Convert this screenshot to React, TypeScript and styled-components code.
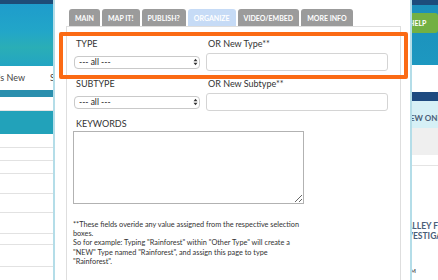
import styled, { createGlobalStyle } from 'styled-components';

const GlobalStyle = createGlobalStyle`
  body {
    margin: 0;
    font-family: Lato, "Open Sans", sans-serif;
    background: #fff;
  }
`;

const tabs = ['MAIN', 'MAP IT!', 'PUBLISH?', 'ORGANIZE', 'VIDEO/EMBED', 'MORE INFO'];

const Arrows = () => (
  <ArrowIcon width="5" height="8" viewBox="0 0 5 8">
    <path d="M0.5 3.2 L2.5 0.8 L4.5 3.2 Z M0.5 4.8 L2.5 7.2 L4.5 4.8 Z" fill="#333" />
  </ArrowIcon>
);

const App = () => {
  return (
    <Page>
      <GlobalStyle />

      <LeftStrip>
        <NavyBar />
        <Hero />
        <NavRow>
          <NavItem>What's New</NavItem>
          <NavClip>Search</NavClip>
        </NavRow>
        <DarkBand />
        <WhiteBand />
        <TealBlock />
        <List>
          {[12, 12, 19, 18, 20, 10, 21, 13].map((h, i) => (
            <ListRow key={i} style={{ height: h }} />
          ))}
        </List>
      </LeftStrip>

      <Modal>
        <TabRow>
          {tabs.map((t) => (
            <Tab key={t} $active={t === 'ORGANIZE'}>{t}</Tab>
          ))}
        </TabRow>

        <Body>
          <Row>
            <Field $w={126}>
              <Label>TYPE</Label>
              <SelectWrap>
                <Select defaultValue="all">
                  <option value="all">--- all ---</option>
                </Select>
                <Arrows />
              </SelectWrap>
            </Field>
            <Field $w={182}>
              <Label>OR New Type**</Label>
              <Input />
            </Field>
          </Row>

          <Row>
            <Field $w={126}>
              <Label>SUBTYPE</Label>
              <SelectWrap>
                <Select defaultValue="all">
                  <option value="all">--- all ---</option>
                </Select>
                <Arrows />
              </SelectWrap>
            </Field>
            <Field $w={182}>
              <Label>OR New Subtype**</Label>
              <Input />
            </Field>
          </Row>

          <Label>KEYWORDS</Label>
          <Keywords />

          <Note>
            **These fields overide any value assigned from the respective selection boxes.
            <br />
            So for example: Typing "Rainforest" within "Other Type" will create a "NEW" Type
            named "Rainforest", and assign this page to type "Rainforest".
          </Note>
        </Body>

        <Highlight />
      </Modal>

      <RightStrip>
        <RightTop>
          <HelpButton>HELP</HelpButton>
        </RightTop>
        <RightWhite />
        <RightNavy />
        <ViewBand>
          <ClipText>VIEW ONLINE</ClipText>
        </ViewBand>
        <GreyBand />
        <RightList>
          <Story>
            <StoryLine $shift={11}>VALLEY FIRE</StoryLine>
            <StoryLine $shift={14}>INVESTIGATION</StoryLine>
          </Story>
          <Small>AM</Small>
        </RightList>
      </RightStrip>
    </Page>
  );
};

export default App;

const Page = styled.div`
  display: flex;
  width: 438px;
  height: 280px;
  overflow: hidden;
`;

/* ---------- left page strip ---------- */

const LeftStrip = styled.div`
  width: 53px;
  flex-shrink: 0;
  display: flex;
  flex-direction: column;
  overflow: hidden;
  border-right: 2px solid #b4dde8;
`;

const NavyBar = styled.div`
  height: 4px;
  background: #1e4c78;
`;

const Hero = styled.div`
  height: 64px;
  background: linear-gradient(180deg, #1e9ccc 0%, #22a6c8 45%, #2aaeb6 70%, #23a5c3 100%);
`;

const NavRow = styled.div`
  height: 25px;
  display: flex;
  justify-content: flex-end;
  align-items: center;
  gap: 25px;
  font-size: 9px;
  color: #444;
  white-space: nowrap;
`;

const NavItem = styled.span``;

const NavClip = styled.span`
  width: 3px;
  overflow: hidden;
  flex-shrink: 0;
`;

const DarkBand = styled.div`
  height: 8px;
  background: #2a8fae;
`;

const WhiteBand = styled.div`
  height: 13px;
  background: #fff;
  border-bottom: 1px solid #e4e4e4;
`;

const TealBlock = styled.div`
  height: 24px;
  background: #22a2ba;
`;

const List = styled.div`
  display: flex;
  flex-direction: column;
  padding-top: 13px;
`;

const ListRow = styled.div`
  border-top: 1px solid #e2e2e2;
  flex-shrink: 0;
`;

/* ---------- modal ---------- */

const Modal = styled.div`
  position: relative;
  flex: 1;
  background: #fff;
  padding: 9px 9px 0 11px;
`;

const TabRow = styled.div`
  display: flex;
  gap: 2px;
  padding-left: 3px;
  height: 17px;
`;

const Tab = styled.div<{ $active?: boolean }>`
  display: flex;
  align-items: center;
  padding: 0 6px;
  border-radius: 3px 3px 0 0;
  background: ${(p) => (p.$active ? '#c6dbf6' : '#9b9b9b')};
  color: #fff;
  font-size: 7px;
  font-weight: 700;
  white-space: nowrap;
`;

const Body = styled.div`
  border: 1px solid #dedede;
  padding: 11px 7px 0 7px;
  height: 300px;
`;

const Row = styled.div`
  display: flex;
  gap: 6px;
  margin-bottom: 7px;
`;

const Field = styled.div<{ $w: number }>`
  width: ${(p) => p.$w}px;
  display: flex;
  flex-direction: column;
`;

const Label = styled.div`
  font-size: 9px;
  line-height: 12px;
  color: #333;
  padding-left: 2px;
  margin-bottom: 3px;
`;

const SelectWrap = styled.div`
  position: relative;
  height: 18px;
  display: flex;
  align-items: center;
`;

const Select = styled.select`
  appearance: none;
  width: 100%;
  height: 13px;
  padding: 0 0 0 4px;
  border: 1px solid #c9c9c9;
  border-radius: 4px;
  background: #fff;
  font-family: Lato, sans-serif;
  font-size: 8.5px;
  line-height: 11px;
  color: #222;
  box-sizing: border-box;
`;

const ArrowIcon = styled.svg`
  position: absolute;
  right: 2px;
  top: 5px;
  pointer-events: none;
`;

const Input = styled.input`
  height: 18px;
  box-sizing: border-box;
  border: 1px solid #d4d4d4;
  border-radius: 3px;
  background: #fff;
`;

const Keywords = styled.textarea`
  display: block;
  width: 231px;
  height: 73px;
  box-sizing: border-box;
  margin: -2px 0 0 -1px;
  border: 1px solid #b2b2b2;
  border-radius: 0;
`;

const Note = styled.p`
  width: 234px;
  margin: 16px 0 0 -1px;
  font-size: 7.3px;
  line-height: 9.2px;
  color: #333;
`;

const Highlight = styled.div`
  position: absolute;
  left: 4px;
  top: 32px;
  width: 349px;
  height: 47px;
  box-sizing: border-box;
  border: 4px solid #fb6a14;
  border-radius: 2px;
`;

/* ---------- right page strip ---------- */

const RightStrip = styled.div`
  width: 26px;
  flex-shrink: 0;
  display: flex;
  flex-direction: column;
  overflow: hidden;
  border-left: 2px solid #b4dde8;
`;

const RightTop = styled.div`
  height: 52px;
  border-top: 5px solid #1d4c7c;
  background: linear-gradient(180deg, #1b8fbc 0%, #1d98c0 100%);
  padding-top: 8px;
`;

const HelpButton = styled.div`
  width: 38px;
  height: 20px;
  margin-left: -12px;
  padding-left: 9px;
  box-sizing: border-box;
  border-radius: 3px;
  background: #72b043;
  color: #fff;
  font-size: 7px;
  font-weight: 700;
  display: flex;
  align-items: center;
`;

const RightWhite = styled.div`
  height: 27px;
`;

const RightNavy = styled.div`
  height: 9px;
  background: #1e4a80;
`;

const ViewBand = styled.div`
  height: 27px;
  background: #d6f0f6;
  display: flex;
  align-items: flex-end;
  padding-bottom: 5px;
  box-sizing: border-box;
`;

const ClipText = styled.div`
  margin-left: -10px;
  white-space: nowrap;
  font-size: 8px;
  font-weight: 700;
  color: #4b5e78;
  line-height: 10px;
`;

const GreyBand = styled.div`
  height: 27px;
  background: #efefef;
`;

const RightList = styled.div`
  border-top: 10px solid #fff;
  padding-top: 56px;
  box-shadow: inset 0 1px 0 #e4e4e4;
`;

const Story = styled.div`
  display: flex;
  flex-direction: column;
`;

const StoryLine = styled.div<{ $shift: number }>`
  margin-left: -${(p) => p.$shift}px;
  white-space: nowrap;
  font-size: 8.5px;
  font-weight: 700;
  color: #4b5e78;
  line-height: 10px;
`;

const Small = styled.div`
  margin: 26px 0 0 -6px;
  font-size: 6px;
  color: #555;
  font-weight: 700;
`;
